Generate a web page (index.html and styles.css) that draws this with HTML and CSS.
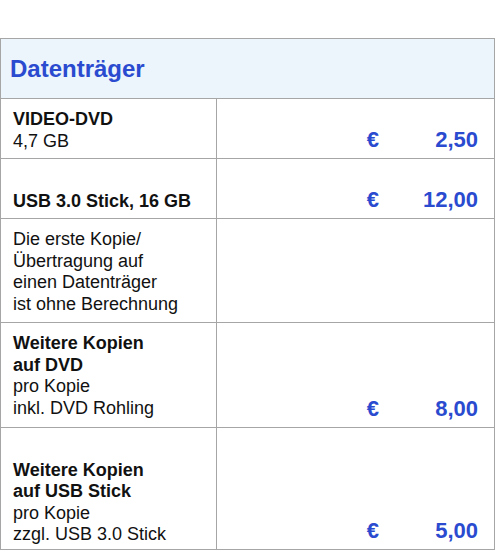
FILE: index.html
```html
<!DOCTYPE html>
<html lang="de">
<head>
  <meta charset="UTF-8">
  <title>Datenträger</title>
  <link rel="stylesheet" href="styles.css">
</head>
<body>
  <div class="page">
    <table class="prices">
      <colgroup>
        <col class="col-item">
        <col class="col-price">
      </colgroup>
      <tr class="head">
        <th colspan="2">Datenträger</th>
      </tr>
      <!-- Datenträger -->
      <tr class="row-short">
        <td class="item"><b>VIDEO-DVD</b><br>4,7 GB</td>
        <td class="price"><span class="cur">€</span><span class="amount">2,50</span></td>
      </tr>
      <tr class="row-short">
        <td class="item"><br><b>USB 3.0 Stick, 16 GB</b></td>
        <td class="price"><span class="cur">€</span><span class="amount">12,00</span></td>
      </tr>
      <tr class="row-mid">
        <td class="item">Die erste Kopie/<br>Übertragung auf<br>einen Datenträger<br>ist ohne Berechnung</td>
        <td class="price"></td>
      </tr>
      <!-- Weitere Kopien -->
      <tr class="row-mid2">
        <td class="item"><b>Weitere Kopien<br>auf DVD</b><br>pro Kopie<br>inkl. DVD Rohling</td>
        <td class="price"><span class="cur">€</span><span class="amount">8,00</span></td>
      </tr>
      <tr class="row-tall">
        <td class="item"><br><b>Weitere Kopien<br>auf USB Stick</b><br>pro Kopie<br>zzgl. USB 3.0 Stick</td>
        <td class="price"><span class="cur">€</span><span class="amount">5,00</span></td>
      </tr>
    </table>
  </div>
</body>
</html>
```

FILE: styles.css
```css
body {
  margin: 0;
  background: #fff;
  font-family: "Liberation Sans", Arial, sans-serif;
  color: #111;
}

.page {
  padding-top: 38px;
}

.prices {
  width: 495px;
  border-collapse: collapse;
  table-layout: fixed;
}

.col-item { width: 216px; }

.prices th,
.prices td {
  border: 1px solid #a6a6a6;
}

/* Heading row */
.head { height: 60px; }

.head th {
  padding: 0 9px;
  background-color: #ecf5fc;
  color: #2a4bcf;
  font-size: 24px;
  font-weight: bold;
  text-align: left;
  vertical-align: middle;
}

.item {
  padding: 10px 4px 0 12px;
  font-size: 18px;
  line-height: 21.5px;
  vertical-align: top;
}

.price {
  padding: 0 16px 5px 0;
  color: #2a4bcf;
  font-size: 22px;
  font-weight: bold;
  text-align: right;
  vertical-align: bottom;
  white-space: nowrap;
}

.cur {
  display: inline-block;
}

.amount {
  display: inline-block;
  width: 99px;
  text-align: right;
}

.row-short { height: 60px; }
.row-mid { height: 104px; }
.row-mid2 { height: 105px; }
.row-tall { height: 122px; }
```
